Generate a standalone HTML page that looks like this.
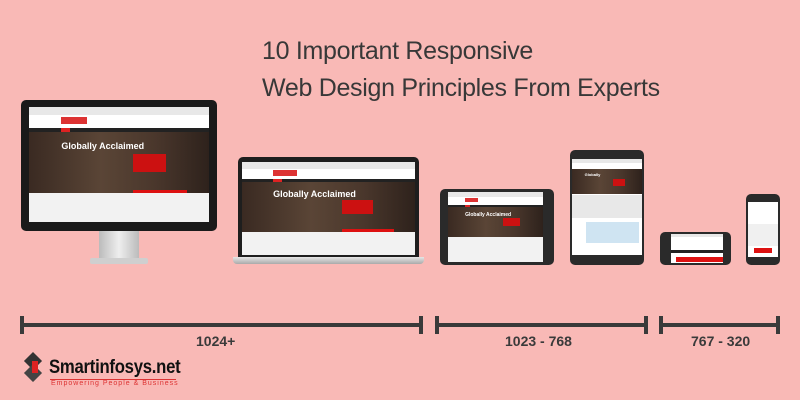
<!DOCTYPE html>
<html><head><meta charset="utf-8"><style>
*{margin:0;padding:0;box-sizing:border-box}
body{width:800px;height:400px;background:#f9b9b6;position:relative;overflow:hidden;font-family:"Liberation Sans",sans-serif}
.t{position:absolute;left:262px;color:#383838;font-size:25px;letter-spacing:-0.3px;white-space:nowrap}
.a{position:absolute}
.scr{position:absolute;overflow:hidden;background:#fff}
.scr .tb{position:absolute;left:0;right:0;top:0;height:7%;background:#e8e8e8}
.scr .hd{position:absolute;left:0;right:0;top:7%;height:11%;background:#fff}
.scr .nv{position:absolute;left:0;right:0;top:18%;height:4%;background:#222}
.scr .nv i{position:absolute;left:18%;width:5%;height:100%;background:#d22}
.scr .hero{position:absolute;left:0;right:0;top:22%;height:53%;background:linear-gradient(90deg,#3a2a22,#5a4536 40%,#4a372c 70%,#2e221c)}
.scr .hero b{position:absolute;left:18%;top:14%;color:#fff;font-size:9px;font-weight:bold;white-space:nowrap}
.scr .hero u{position:absolute;left:58%;top:35%;width:18%;height:30%;background:#c11;text-decoration:none}
.scr .lg{position:absolute;left:18%;top:9%;width:14%;height:6%;background:#d33}
.scr .ft{position:absolute;left:0;right:0;top:75%;bottom:0;background:#f2f2f2}
.scr .rb{position:absolute;left:58%;top:72%;width:30%;height:4%;background:#d11}
.bar{position:absolute;height:4px;background:#3a3a3a;top:323px}
.tick{position:absolute;width:4px;height:18px;background:#3a3a3a;top:316px}
.lbl{position:absolute;top:333px;font-size:14px;font-weight:bold;color:#3a3a3a}
</style></head><body>
<div class="t" style="top:37px">10 Important Responsive</div>
<div class="t" style="top:74px">Web Design Principles From Experts</div>

<!-- monitor -->
<div class="a" style="left:21px;top:100px;width:196px;height:131px;background:#1a1a1a;border-radius:5px"></div>
<div class="scr" style="left:29px;top:107px;width:180px;height:115px">
<div class="tb"></div><div class="hd"></div><div class="lg"></div><div class="nv"><i></i></div><div class="hero"><b>Globally Acclaimed</b><u></u></div><div class="rb"></div><div class="ft"></div></div>
<div class="a" style="left:99px;top:231px;width:40px;height:28px;background:linear-gradient(90deg,#bbb,#eee,#bbb)"></div>
<div class="a" style="left:90px;top:258px;width:58px;height:6px;background:#cfcfcf;border-radius:2px"></div>

<!-- laptop -->
<div class="a" style="left:238px;top:157px;width:181px;height:101px;background:#1e1e1e;border-radius:5px 5px 0 0"></div>
<div class="scr" style="left:242px;top:162px;width:173px;height:93px">
<div class="tb"></div><div class="hd"></div><div class="lg"></div><div class="nv"><i></i></div><div class="hero"><b>Globally Acclaimed</b><u></u></div><div class="rb"></div><div class="ft"></div></div>
<div class="a" style="left:233px;top:257px;width:191px;height:7px;background:linear-gradient(#e6e6e6,#aaa);border-radius:0 0 4px 4px"></div>

<!-- tablet landscape -->
<div class="a" style="left:440px;top:189px;width:114px;height:76px;background:#2a2a2a;border-radius:5px"></div>
<div class="scr" style="left:448px;top:192px;width:95px;height:70px">
<div class="tb"></div><div class="hd"></div><div class="lg"></div><div class="nv"><i></i></div><div class="hero" style="height:42%"><b style="font-size:5px">Globally Acclaimed</b><u></u></div><div class="ft" style="top:64%"></div></div>

<!-- tablet portrait -->
<div class="a" style="left:570px;top:150px;width:74px;height:115px;background:#2a2a2a;border-radius:5px"></div>
<div class="scr" style="left:572px;top:159px;width:70px;height:96px">
<div class="tb" style="height:4%"></div><div class="hd" style="top:4%;height:6%"></div><div class="hero" style="top:10%;height:26%"><b style="font-size:4px">Globally</b><u style="top:40%"></u></div><div class="a" style="left:0;right:0;top:37%;height:24%;background:#e8e8e8"></div><div class="a" style="left:20%;right:5%;top:66%;height:22%;background:#cfe4f2"></div></div>

<!-- phone landscape -->
<div class="a" style="left:660px;top:232px;width:71px;height:33px;background:#2a2a2a;border-radius:5px"></div>
<div class="scr" style="left:671px;top:234px;width:52px;height:29px">
<div class="tb" style="height:12%"></div><div class="a" style="left:0;right:0;top:55%;height:10%;background:#222"></div><div class="a" style="left:10%;right:0;top:80%;height:15%;background:#d11"></div></div>

<!-- phone portrait -->
<div class="a" style="left:746px;top:194px;width:34px;height:71px;background:#2a2a2a;border-radius:5px"></div>
<div class="scr" style="left:748px;top:202px;width:30px;height:55px">
<div class="a" style="left:0;right:0;top:40%;height:40%;background:#f0f0f0"></div><div class="a" style="left:20%;right:20%;top:84%;height:8%;background:#d11"></div></div>

<!-- bars -->
<div class="tick" style="left:20px"></div><div class="bar" style="left:20px;width:402px"></div><div class="tick" style="left:419px"></div>
<div class="tick" style="left:435px"></div><div class="bar" style="left:435px;width:212px"></div><div class="tick" style="left:644px"></div>
<div class="tick" style="left:659px"></div><div class="bar" style="left:659px;width:120px"></div><div class="tick" style="left:776px"></div>
<div class="lbl" style="left:196px">1024+</div>
<div class="lbl" style="left:505px">1023 - 768</div>
<div class="lbl" style="left:691px">767 - 320</div>

<!-- logo -->
<div class="a" style="left:22px;top:353px;width:24px;height:30px">
<div class="a" style="left:3px;top:0;width:16px;height:16px;background:#333;transform:rotate(45deg) scale(.8)"></div>
<div class="a" style="left:3px;top:12px;width:16px;height:16px;background:#444;transform:rotate(45deg) scale(.8)"></div>
<div class="a" style="left:10px;top:8px;width:6px;height:12px;background:#d22"></div></div>
<div class="a" style="left:49px;top:357px;font-size:19px;font-weight:bold;color:#111;letter-spacing:-0.3px;transform:scaleX(.88);transform-origin:left">Smartinfosys.net</div>
<div class="a" style="left:50px;top:379px;width:126px;height:1px;background:#d33"></div>
<div class="a" style="left:51px;top:380px;font-size:7px;color:#d33;letter-spacing:1px">Empowering People &amp; Business</div>
</body></html>
